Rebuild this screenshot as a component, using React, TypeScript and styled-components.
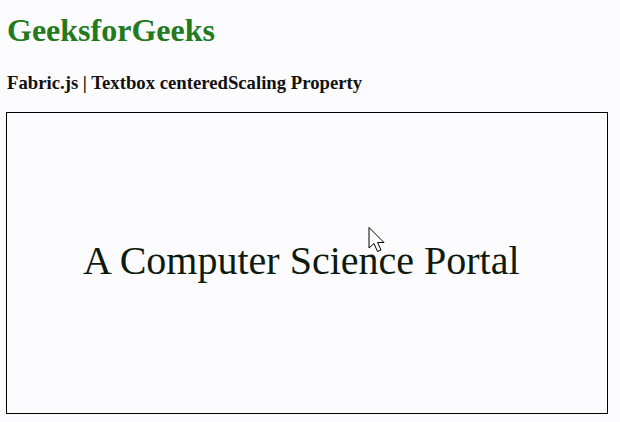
import React from "react";
import styled, { createGlobalStyle } from "styled-components";

const Global = createGlobalStyle`
  html, body { margin: 0; padding: 0; background: #fcfcff; }
  body { font-family: "Liberation Serif", "Times New Roman", serif; }
`;

const Page = styled.div`
  padding: 0 0 0 6px;
  display: flex;
  flex-direction: column;
`;

const Title = styled.h1`
  margin: 14px 0 0 1px;
  font-size: 32px;
  line-height: 32px;
  font-weight: bold;
  color: #237a1d;
`;

const Subtitle = styled.h3`
  margin: 27px 0 0 1px;
  font-size: 18.72px;
  line-height: 19px;
  font-weight: bold;
  color: #111;
`;

const Canvas = styled.div`
  position: relative;
  margin-top: 20px;
  width: 600px;
  height: 300px;
  border: 1px solid #000;
  background: #fcfcff;
`;

const CanvasText = styled.span`
  position: absolute;
  left: 76px;
  top: 128px;
  font-size: 40px;
  line-height: 40px;
  white-space: nowrap;
  color: #0d1a0d;
`;

const Cursor = styled.svg`
  position: absolute;
  left: 361px;
  top: 114px;
`;

export default function App() {
  return (
    <>
      <Global />
      <Page>
        <Title>GeeksforGeeks</Title>
        <Subtitle>Fabric.js | Textbox centeredScaling Property</Subtitle>
        <Canvas>
          <CanvasText>A Computer Science Portal</CanvasText>
          <Cursor width="20" height="28" viewBox="0 0 20 28">
            <path
              d="M1 0.5 L1 21 L6 16.5 L9.5 24.5 L13 23 L9.5 15.5 L16 15.5 Z"
              fill="#fff"
              stroke="#000"
              strokeWidth="1"
              strokeLinejoin="miter"
            />
          </Cursor>
        </Canvas>
      </Page>
    </>
  );
}
